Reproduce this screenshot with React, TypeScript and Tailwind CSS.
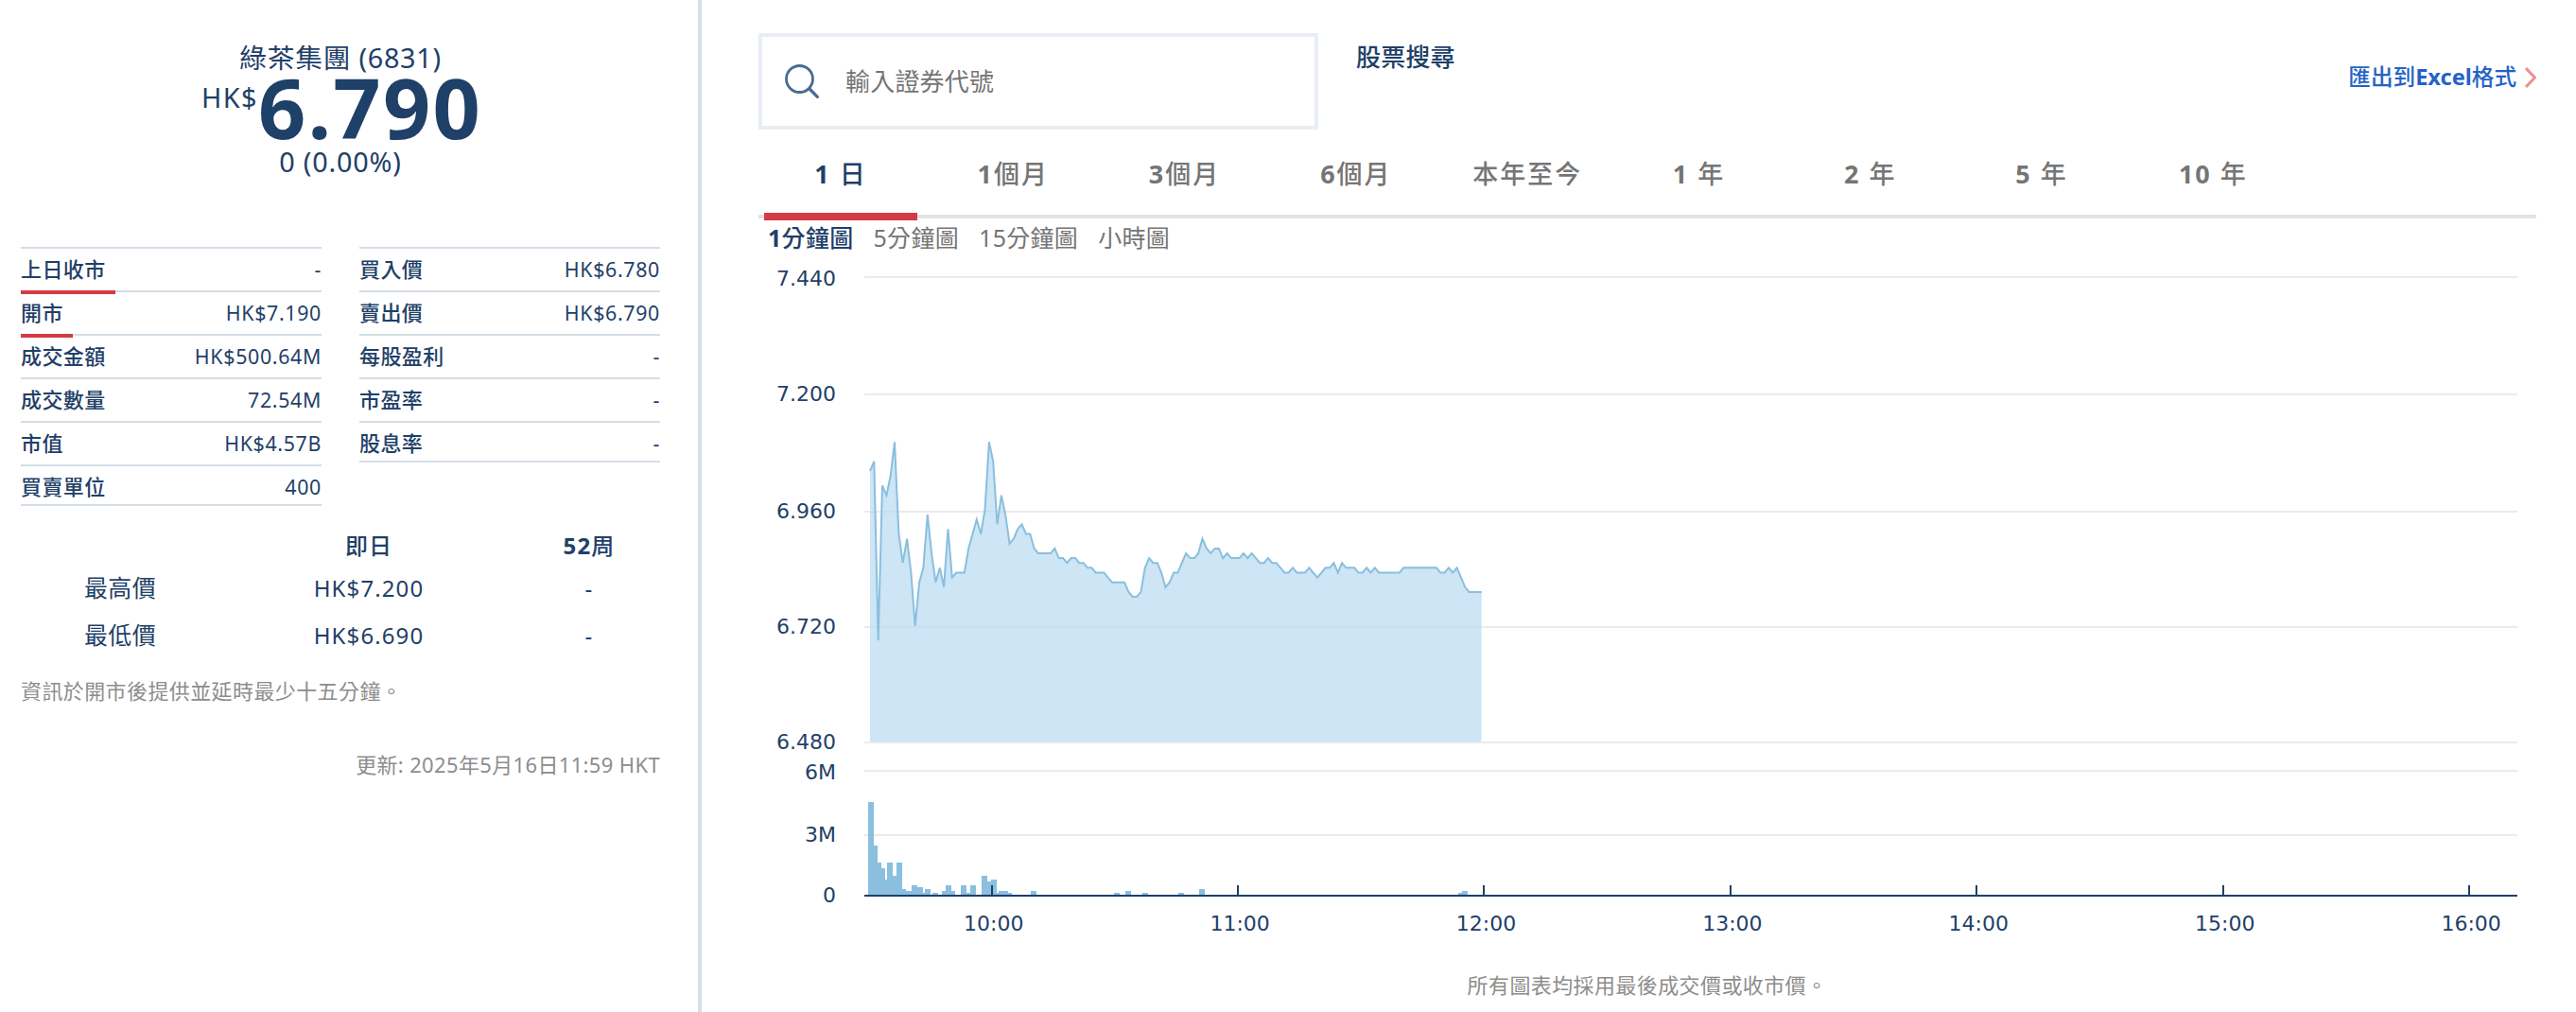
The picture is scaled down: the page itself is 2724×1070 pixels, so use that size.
import { clsx } from "clsx"

type Stat = { label: string; value: string; underline?: string }

const leftStats: Stat[] = [
  { label: "上日收市", value: "-", underline: "w-[100px]" },
  { label: "開市", value: "HK$7.190", underline: "w-[55px]" },
  { label: "成交金額", value: "HK$500.64M" },
  { label: "成交數量", value: "72.54M" },
  { label: "市值", value: "HK$4.57B" },
  { label: "買賣單位", value: "400" },
]

const rightStats: Stat[] = [
  { label: "買入價", value: "HK$6.780" },
  { label: "賣出價", value: "HK$6.790" },
  { label: "每股盈利", value: "-" },
  { label: "市盈率", value: "-" },
  { label: "股息率", value: "-" },
]

const periods = ["1 日", "1個月", "3個月", "6個月", "本年至今", "1 年", "2 年", "5 年", "10 年"]
const intervals = ["1分鐘圖", "5分鐘圖", "15分鐘圖", "小時圖"]

// one price per minute from 09:30, in cents
const prices = [
  704, 706, 669, 701, 699, 703, 710, 691, 685, 690, 683, 672, 681, 684, 695, 687, 681, 684, 680, 692,
  682, 683, 683, 683, 688, 691, 694, 691, 696, 710, 706, 693, 699, 695, 689, 690, 692, 693, 691, 691,
  688, 687, 687, 687, 687, 688, 686, 686, 685, 686, 686, 685, 685, 684, 684, 683, 683, 683, 682, 681,
  681, 681, 681, 679, 678, 678, 679, 684, 686, 685, 685, 683, 680, 681, 683, 683, 685, 687, 686, 686,
  687, 690, 688, 687, 688, 688, 686, 687, 686, 686, 686, 687, 686, 687, 686, 685, 685, 686, 685, 685,
  684, 683, 683, 684, 683, 683, 683, 684, 683, 682, 683, 684, 684, 685, 683, 685, 684, 684, 684, 683,
  683, 684, 683, 684, 683, 683, 683, 683, 683, 683, 684, 684, 684, 684, 684, 684, 684, 684, 684, 683,
  683, 684, 683, 684, 682, 680, 679, 679, 679, 679,
]

// x, width, height
const volumes = [
  [116, 6, 98], [122, 4, 52], [126, 4, 34], [130, 4, 28], [134, 2, 16], [136, 6, 34], [142, 4, 20],
  [146, 6, 34], [152, 4, 6], [156, 6, 4], [162, 6, 10], [168, 6, 8], [174, 2, 2], [176, 6, 6],
  [184, 6, 2], [194, 4, 4], [198, 6, 10], [204, 4, 4], [214, 6, 10], [220, 4, 2], [224, 6, 10],
  [236, 6, 20], [242, 4, 14], [246, 6, 16], [252, 2, 2], [254, 10, 4], [264, 4, 2], [288, 6, 4],
  [376, 6, 2], [388, 6, 4], [406, 6, 2], [444, 6, 2], [466, 6, 6], [740, 4, 2], [744, 6, 4],
]

const yAxis = [
  { label: "7.440", line: 20, text: 21 },
  { label: "7.200", line: 144, text: 143 },
  { label: "6.960", line: 268, text: 267 },
  { label: "6.720", line: 390, text: 389 },
  { label: "6.480", line: 512, text: 511 },
  { label: "6M", line: 542, text: 543 },
  { label: "3M", line: 610, text: 609 },
  { label: "0", line: 674, text: 673 },
]

const hours = ["10:00", "11:00", "12:00", "13:00", "14:00", "15:00", "16:00"]

// medium Chinese glyphs next to bold latin ones
const Strong = ({ text }: { text: string }) => (
  <span className="font-medium">
    {text.split(/([A-Za-z0-9]+)/).map((part, i) => (i % 2 ? <b key={i} className="font-bold">{part}</b> : part))}
  </span>
)

const StatList = ({ items }: { items: Stat[] }) => (
  <ul className="w-[318px]">
    {items.map((item, i) => (
      <li
        key={item.label}
        className={clsx(
          "relative flex items-center justify-between border-t-2 border-[#d3dde6]",
          i === items.length - 1 ? "h-11 border-b-2 pt-1" : "h-[46px]"
        )}
      >
        <span className="pb-0.5 font-medium text-[22px] tracking-[0.4px]">{item.label}</span>
        <span className="text-[21.4px] tracking-[0.65px]">{item.value}</span>
        {item.underline && (
          <span className={clsx("absolute left-0 top-11 z-10 h-1 bg-[#d43b46]", item.underline)} />
        )}
      </li>
    ))}
  </ul>
)

const Quote = () => (
  <section className="w-[742px] shrink-0 border-r-4 border-[#d3dfea] pl-[22px] pr-10 pt-[42px]">
    <div className="flex flex-col items-center text-[28.8px]">
      <h1 className="h-[38px] leading-[38px] tracking-[0.7px]">綠茶集團 (6831)</h1>
      <div className="-mr-[3px] flex h-[68px] items-start">
        <span className="leading-[46px] tracking-[1.4px]">HK$</span>
        <span className="text-[88px] leading-[66px] font-bold tracking-[2.2px]">6.790</span>
      </div>
      <span className="h-[46px] leading-[46px] tracking-[0.8px]">0 (0.00%)</span>
    </div>

    <div className="mt-[67px] flex items-start justify-between">
      <StatList items={leftStats} />
      <StatList items={rightStats} />
    </div>

    <table className="mt-[22px] w-[678px] table-fixed text-center text-2xl tracking-[1.1px]">
      <thead>
        <tr className="h-10">
          <th className="w-[210px] p-0"></th>
          <th className="w-[314px] p-0 pl-0.5 leading-10"><Strong text="即日" /></th>
          <th className="w-[154px] p-0 leading-10"><Strong text="52周" /></th>
        </tr>
      </thead>
      <tbody>
        <tr className="h-[50px]">
          <td className="text-[25px] tracking-[0.4px]">最高價</td>
          <td className="pl-0.5">HK$7.200</td>
          <td>-</td>
        </tr>
        <tr className="h-[50px]">
          <td className="text-[25px] tracking-[0.4px]">最低價</td>
          <td className="pl-0.5">HK$6.690</td>
          <td>-</td>
        </tr>
      </tbody>
    </table>

    <p className="mt-[18px] text-[22px] leading-[30px] tracking-[0.4px] text-[#8d8d8d]">資訊於開市後提供並延時最少十五分鐘。</p>
    <p className="mt-12 text-right text-[22px] leading-[30px] tracking-[0.35px] text-[#8d8d8d]">更新: 2025年5月16日11:59 HKT</p>
  </section>
)

const SearchIcon = () => (
  <svg className="h-9 w-9" viewBox="0 0 36 36" fill="none" stroke="#4a6a92" strokeWidth="2.8">
    <circle cx="15.5" cy="15.5" r="14" />
    <path d="M25.5 25.5 35.5 35.5" strokeWidth="3.2" />
  </svg>
)

const Chart = () => {
  const points = prices.map((p, i) => `${(118 + i * 4.34).toFixed(1)},${(194.3 + (710 - p) * 5.117).toFixed(1)}`)

  return (
    <svg className="block h-[740px] w-[1880px]" viewBox="0 0 1880 740">
      {yAxis.map(({ label, line, text }) => (
        <g key={label}>
          {label !== "0" && <path d={`M112 ${line}H1860`} stroke="#ebebeb" strokeWidth="2" />}
          <text x="82" y={text + 8} textAnchor="end" className="fill-[#1f4068] font-['DejaVu_Sans',sans-serif] text-[22px]">
            {label}
          </text>
        </g>
      ))}

      <polygon points={`118,511 ${points.join(" ")} 764.6,511`} fill="#b8daf1" fillOpacity="0.7" />
      <polyline points={points.join(" ")} fill="none" stroke="#8abfdf" strokeWidth="2" />

      {volumes.map(([x, w, h]) => (
        <rect key={x} x={x} y={673 - h} width={w} height={h} fill="#8abfdf" />
      ))}

      <path d="M112 674H1860" stroke="#1f4068" strokeWidth="2" />
      {hours.map((hour, i) => (
        <g key={hour}>
          <path d={`M${Math.floor(247 + i * 260.4)} 663v10`} stroke="#1f4068" strokeWidth="2" />
          <text x={248.7 + i * 260.4} y="711" textAnchor="middle" className="fill-[#1f4068] font-['DejaVu_Sans',sans-serif] text-[22px]">
            {hour}
          </text>
        </g>
      ))}
    </svg>
  )
}

const App = () => {
  return (
    <main className="flex h-[1070px] w-[2724px] overflow-hidden bg-white font-['Noto_Sans','Noto_Sans_CJK_TC',sans-serif] text-[#1f4068]">
      <Quote />

      <section className="flex-1 pl-[60px] pr-[42px] pt-[35px]">
        <div className="flex h-[102px] items-start">
          <div className="flex h-full w-[592px] items-center border-4 border-[#e8eef3] pl-6">
            <SearchIcon />
            <span className="ml-7 text-[26px] tracking-[0.2px] text-[#757575]">輸入證券代號</span>
          </div>
          <span className="ml-10 text-[26px] leading-[50px] font-medium tracking-[0.2px]">股票搜尋</span>
          <a className="ml-auto flex h-[94px] items-center gap-[9px] text-[23.6px] text-[#2463c6]">
            <Strong text="匯出到Excel格式" />
            <svg className="h-[22px] w-3" viewBox="0 0 12 22" fill="none" stroke="#ec8f95" strokeWidth="3">
              <path d="M1 1 10.5 11 1 21" />
            </svg>
          </a>
        </div>

        <nav className="flex h-[94px] gap-[19.3px] border-b-4 border-[#e3e3e3] pl-1.5">
          {periods.map((period, i) => (
            <button
              key={period}
              className={clsx(
                "relative h-[94px] w-[162px] shrink-0 text-[27px] tracking-[2px]",
                i === 0 ? "text-[#1f4068]" : "pl-0.5 text-[#757575]"
              )}
            >
              <Strong text={period} />
              {i === 0 && <span className="absolute left-0 top-[88px] h-2 w-full bg-[#d43b46]" />}
            </button>
          ))}
        </nav>

        <div className="flex h-[42px] items-center gap-[21px] pl-[10px] text-[25px] tracking-[0.3px] text-[#757575]">
          {intervals.map((interval, i) => (
            <span key={interval} className={clsx(i === 0 && "text-[#1f4068]")}>
              {i === 0 ? <Strong text={interval} /> : interval}
            </span>
          ))}
        </div>

        <Chart />
        <p className="text-center text-[22px] leading-[56px] tracking-[0.4px] text-[#8d8d8d]">所有圖表均採用最後成交價或收市價。</p>
      </section>
    </main>
  )
}

export default App
